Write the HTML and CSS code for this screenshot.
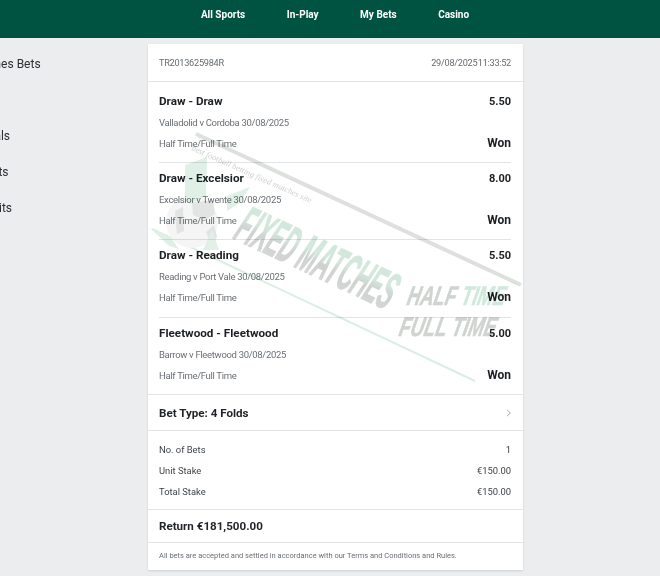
FILE: index.html
```html
<!DOCTYPE html>
<html lang="en">
<head>
<meta charset="utf-8">
<title>Bet receipt</title>
<link rel="stylesheet" href="styles.css">
</head>
<body>
<header class="topbar">
  <nav class="topnav">
    <a>All Sports</a><a>In-Play</a><a>My Bets</a><a>Casino</a>
  </nav>
</header>
<div class="page">
  <aside class="sidenav">
    <a class="side-first">In Games Bets</a>
    <a>Specials</a>
    <a>Accents</a>
    <a>Deposits</a>
  </aside>
  <main class="card">
    <div class="ref-row"><span>TR2013625984R</span><span class="stamp">29/08/2025 11:33:52</span></div>
    <section class="legs">
      <article class="leg">
        <div class="line"><strong>Draw - Draw</strong><strong class="odds">5.50</strong></div>
        <div class="line sub">Valladolid v Cordoba 30/08/2025</div>
        <div class="line sub"><span>Half Time/Full Time</span><b class="won">Won</b></div>
      </article>
      <article class="leg">
        <div class="line"><strong>Draw - Excelsior</strong><strong class="odds">8.00</strong></div>
        <div class="line sub">Excelsior v Twente 30/08/2025</div>
        <div class="line sub"><span>Half Time/Full Time</span><b class="won">Won</b></div>
      </article>
      <article class="leg">
        <div class="line"><strong>Draw - Reading</strong><strong class="odds">5.50</strong></div>
        <div class="line sub">Reading v Port Vale 30/08/2025</div>
        <div class="line sub"><span>Half Time/Full Time</span><b class="won">Won</b></div>
      </article>
      <article class="leg">
        <div class="line"><strong>Fleetwood - Fleetwood</strong><strong class="odds">5.00</strong></div>
        <div class="line sub">Barrow v Fleetwood 30/08/2025</div>
        <div class="line sub"><span>Half Time/Full Time</span><b class="won">Won</b></div>
      </article>
    </section>
    <div class="bet-type"><strong>Bet Type: 4 Folds</strong>
      <svg class="chev" width="6" height="8" viewBox="0 0 6 8"><path d="M1 .8 4.4 4 1 7.2" fill="none" stroke="#a5a5a5" stroke-width=".9"/></svg>
    </div>
    <div class="stakes">
      <div class="line"><span>No. of Bets</span><span>1</span></div>
      <div class="line"><span>Unit Stake</span><span>€150.00</span></div>
      <div class="line"><span>Total Stake</span><span>€150.00</span></div>
    </div>
    <div class="return"><strong>Return €181,500.00</strong></div>
    <div class="terms">All bets are accepted and settled in accordance with our Terms and Conditions and Rules.</div>
    <svg class="watermark" width="375" height="270" viewBox="148 130 375 270" aria-hidden="true">
      <defs>
        <linearGradient id="wm" x1="0" y1="0" x2="0" y2="1">
          <stop offset="0" stop-color="#cfe9da"/><stop offset=".42" stop-color="#d3e7dc"/><stop offset=".58" stop-color="#cfd1d0"/><stop offset="1" stop-color="#d9dbda"/>
        </linearGradient>
      </defs>
      <path d="M196 134 521 285" stroke="#dde0dd" stroke-width="4"/>
      <path d="M152 229 475 381" stroke="#daeee3" stroke-width="2"/>
      <circle cx="192" cy="222" r="26" fill="#f4f5f4"/>
      <path d="M192 203l21-3 2 14-10 6-12-5zM175 211l8-4 1 24-7 3zM206 232l8-7 3 12-6 8z" fill="#e2e3e3"/>
      <path d="M185 165l22-8-1 39-15 8-6-5zM227 196l23-9-10 16-13 8zM150 228l21 10 8 11-10-3zM203 250l9-20 7 20z" fill="#e0f0e7"/>
      <g class="wm-slogan" transform="translate(191 150) rotate(24)"><text>best football betting fixed matches site</text></g>
      <g transform="translate(232 238) rotate(25) skewX(-4) scale(.7 1.78)"><text class="wm-main" fill="url(#wm)" stroke="url(#wm)">FIXED MATCHES</text></g>
      <g transform="translate(406 305) skewX(-12) scale(.68 1)"><text class="wm-sub wm-grey">HALF <tspan class="wm-green">TIME</tspan></text></g>
      <g transform="translate(398 336) skewX(-12) scale(.69 1)"><text class="wm-sub wm-grey">FULL TIME</text></g>
    </svg>
  </main>
</div>
</body>
</html>
```
FILE: styles.css
```css
* { box-sizing: border-box; }
html, body { margin: 0; height: 100%; }
body {
  background: #ebedef;
  font-family: Roboto, "Open Sans", sans-serif;
  color: #1f2226;
  overflow: hidden;
}
.topbar {
  height: 38px;
  background: #005241;
  padding-left: 10px;
}
.topnav {
  display: flex;
  justify-content: center;
  gap: 41.5px;
  padding-top: 8px;
  font-size: 10px;
  font-weight: 700;
  line-height: 14px;
  color: #fff;
}
.page { display: flex; }
.sidenav {
  width: 148px;
  flex: none;
  overflow: hidden;
  display: flex;
  flex-direction: column;
  gap: 20px;
  padding-top: 18px;
  font-size: 12px;
  line-height: 16px;
  color: #2b2e32;
  white-space: nowrap;
}
.sidenav a { margin-left: -35px; }
.sidenav .side-first { margin-left: -37px; margin-bottom: 36px; }
.card {
  position: relative;
  width: 375px;
  height: 526px;
  margin-top: 6px;
  background: #fff;
  box-shadow: 0 1px 2px rgba(0, 0, 0, .12);
}
.ref-row {
  height: 38px;
  display: flex;
  justify-content: space-between;
  align-items: center;
  padding: 0 12px 0 11px;
  border-bottom: 1px solid #e3e4e5;
  font-size: 9.2px;
  letter-spacing: -.28px;
  color: #666b70;
}
.stamp { word-spacing: -1.5px; }
.legs { padding: 0 12px 0 11px; }
.leg { height: 77px; padding-top: 4.5px; border-bottom: 1px solid #e3e4e5; }
.leg:first-child { height: 81px; padding-top: 8.5px; }
.leg:nth-child(3) { height: 78px; }
.leg:last-child { border-bottom: 0; height: 76px; }
.line {
  display: flex;
  justify-content: space-between;
  align-items: center;
}
.leg .line { height: 21px; }
.line strong { font-size: 11.7px; font-weight: 700; color: #1c1f23; }
.line .odds { font-size: 11px; }
.sub { font-size: 9.5px; letter-spacing: -.32px; color: #6a6f74; }
.won { font-size: 12px; letter-spacing: 0; color: #1c1f23; }
.bet-type {
  height: 37px;
  display: flex;
  justify-content: space-between;
  align-items: center;
  padding: 0 11px;
  border-top: 1px solid #e3e4e5;
  border-bottom: 1px solid #e3e4e5;
}
.bet-type strong { font-size: 11.6px; }
.stakes {
  height: 79px;
  padding: 8px 12px 0 11px;
  border-bottom: 1px solid #e3e4e5;
  font-size: 9.4px;
  color: #3b3f44;
}
.stakes .line { height: 21px; }
.return {
  height: 33px;
  display: flex;
  align-items: center;
  padding: 0 11px;
  border-bottom: 1px solid #e3e4e5;
}
.return strong { font-size: 11.6px; }
.terms {
  padding: 8px 11px 0;
  font-size: 7.5px;
  color: #6a6f74;
}
.watermark {
  position: absolute;
  left: 0;
  top: 86px;
  pointer-events: none;
  mix-blend-mode: multiply;
}
.wm-slogan text { font: italic 8.5px "Liberation Serif", serif; fill: #cdd0ce; }
.wm-main { font: italic 700 30px "Liberation Sans", sans-serif; stroke-width: .7px; }
.wm-sub { font: italic 700 27px "Liberation Sans", sans-serif; stroke: currentColor; stroke-width: .6px; }
.wm-green { fill: #cfe9dc; color: #cfe9dc; }
.wm-grey { fill: #cfd4d1; color: #cfd4d1; }
```
